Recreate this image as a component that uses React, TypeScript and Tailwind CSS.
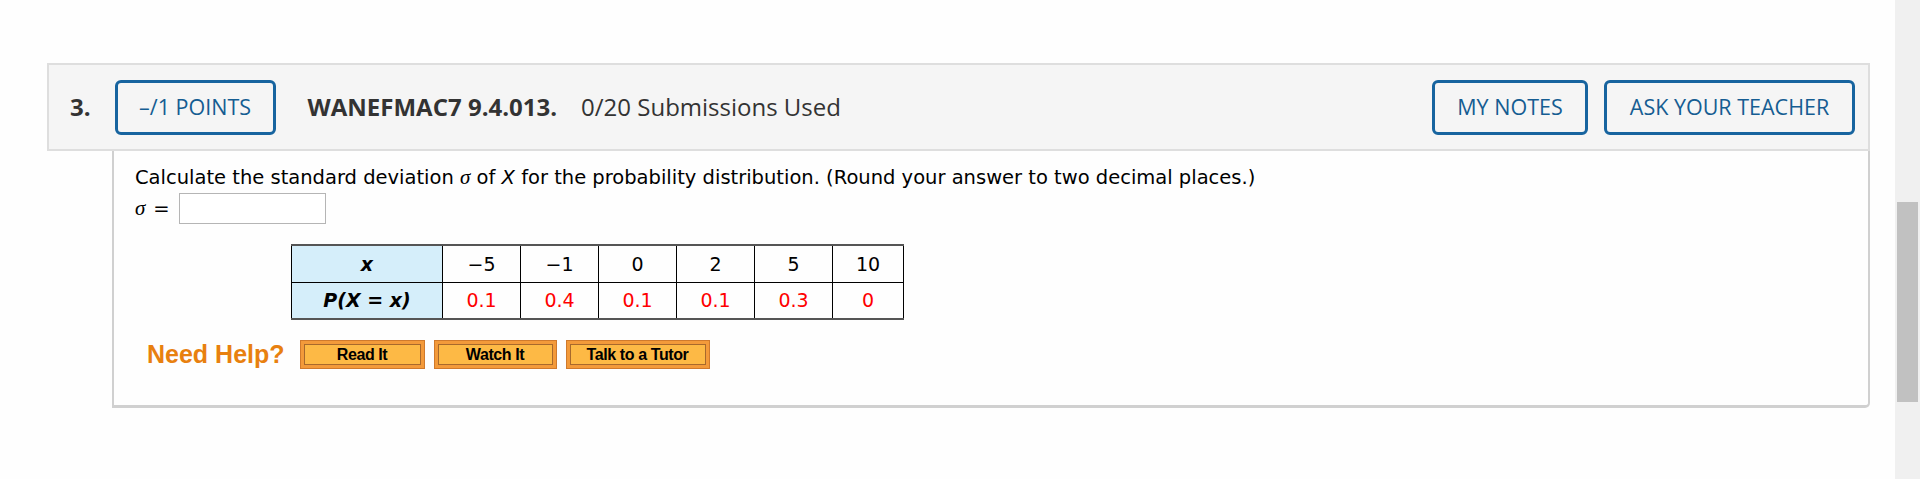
const values = [
  { x: '−5', p: '0.1', w: 'w-[78px]' },
  { x: '−1', p: '0.4', w: 'w-[78px]' },
  { x: '0', p: '0.1', w: 'w-[78px]' },
  { x: '2', p: '0.1', w: 'w-[78px]' },
  { x: '5', p: '0.3', w: 'w-[78px]' },
  { x: '10', p: '0', w: 'w-[71px]' },
]

const verdana = { fontFamily: '"DejaVu Sans", Verdana, sans-serif' }

function HelpButton({ label, width }: { label: string; width: string }) {
  return (
    <div
      className={`${width} flex h-[29px] items-stretch border border-[#d07a2c] bg-[#f39a3a] p-[3px]`}
    >
      <div className="flex flex-1 items-center justify-center border border-[#a8692c] bg-[#fdb945] text-[16px] font-bold tracking-[-0.4px] text-black">
        {label}
      </div>
    </div>
  )
}

function OutlineButton({ label, width }: { label: string; width: string }) {
  return (
    <div
      className={`${width} flex h-[55px] items-center justify-center rounded-[6px] border-[3px] border-[#17649f] text-[21.5px] text-[#155d92]`}
    >
      {label}
    </div>
  )
}

export default function App() {
  return (
    <div className="flex min-h-[479px] bg-[#fefefe]" style={{ fontFamily: '"Open Sans", sans-serif' }}>
      <div className="flex-1 pt-[63px] pl-[47px] pr-[25px]">
        <div className="flex h-[88px] items-center border-2 border-[#dedede] bg-[#f5f5f5] pl-[21px] pr-[13px]">
          <span className="mr-[24px] text-[24px] font-bold text-[#333]">3.</span>
          <OutlineButton label="–/1 POINTS" width="w-[161px]" />
          <span className="ml-[32px] text-[24px] font-bold text-[#333]">WANEFMAC7 9.4.013.</span>
          <span className="ml-[24px] text-[24px] text-[#333]">0/20 Submissions Used</span>
          <div className="ml-auto flex gap-[16px]">
            <OutlineButton label="MY NOTES" width="w-[156px]" />
            <OutlineButton label="ASK YOUR TEACHER" width="w-[251px]" />
          </div>
        </div>

        <div
          className="ml-[65px] h-[257px] rounded-br-[5px] border-x-2 border-b-[3px] border-[#d0d0d0] pl-[21px] pt-[14px]"
          style={verdana}
        >
          <p className="text-[19.5px] leading-[24px] text-black">
            Calculate the standard deviation{' '}
            <i style={{ fontFamily: '"Liberation Serif", serif' }} className="text-[21px]">σ</i> of <i>X</i> for the
            probability distribution. (Round your answer to two decimal places.)
          </p>
          <div className="mt-[3px] flex h-[31px] items-center text-[19.5px]">
            <i style={{ fontFamily: '"Liberation Serif", serif' }} className="text-[21px]">σ</i>
            <span className="ml-[8px]">=</span>
            <div className="ml-[9px] h-[31px] w-[147px] border border-[#b5b5b5] bg-white" />
          </div>

          <table className="mt-[20px] ml-[156px] table-fixed border-collapse border-y-2 border-x border-y-[#555] border-x-black text-center text-[19px]">
            <tbody>
              <tr className="h-[37px]">
                <td className="w-[151px] border border-black bg-[#d5eefa] p-0 font-bold italic">x</td>
                {values.map((v) => (
                  <td key={v.x + 'x'} className={`${v.w} border border-black p-0 text-black`}>
                    {v.x}
                  </td>
                ))}
              </tr>
              <tr className="h-[37px]">
                <td className="border border-black bg-[#d5eefa] p-0 font-bold italic">P(X = x)</td>
                {values.map((v, i) => (
                  <td key={i} className="border border-black p-0 text-[#ff0000]">
                    {v.p}
                  </td>
                ))}
              </tr>
            </tbody>
          </table>

          <div className="mt-[16px] flex items-center" style={{ fontFamily: '"Liberation Sans", Arial, sans-serif' }}>
            <span className="ml-[12px] text-[25px] font-bold text-[#e8800f]">Need Help?</span>
            <div className="ml-[15px] flex gap-[9px]">
              <HelpButton label="Read It" width="w-[125px]" />
              <HelpButton label="Watch It" width="w-[123px]" />
              <HelpButton label="Talk to a Tutor" width="w-[144px]" />
            </div>
          </div>
        </div>
      </div>

      <div className="w-[25px] bg-[#f0f0f0] px-[2px] pt-[202px]">
        <div className="h-[200px] bg-[#c1c1c1]" />
      </div>
    </div>
  )
}
